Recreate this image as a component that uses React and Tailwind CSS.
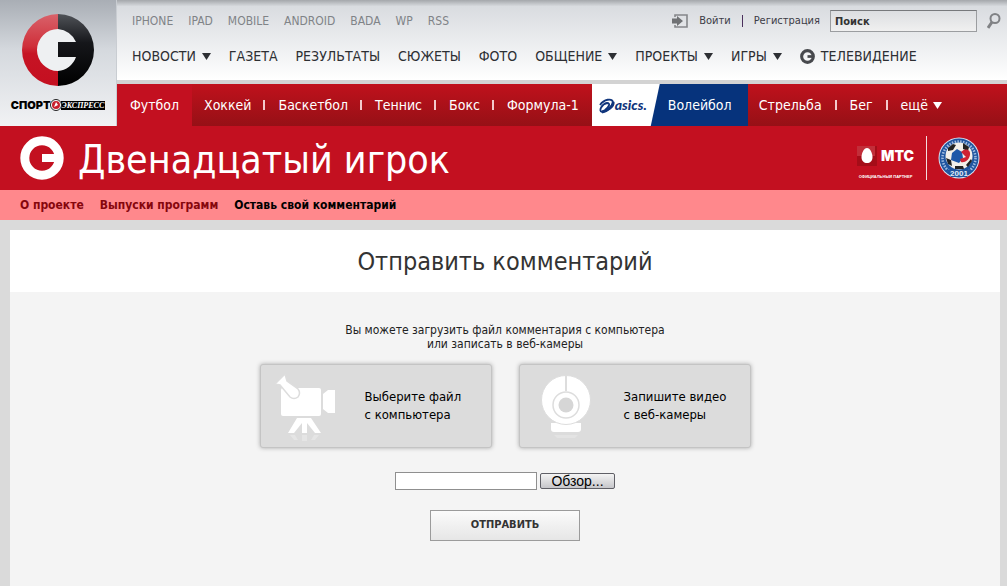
import { useState } from 'react'

const PLATFORMS = ['IPHONE', 'IPAD', 'MOBILE', 'ANDROID', 'BADA', 'WP', 'RSS']

const SECTIONS = [
  { label: 'НОВОСТИ', menu: true },
  { label: 'ГАЗЕТА' },
  { label: 'РЕЗУЛЬТАТЫ' },
  { label: 'СЮЖЕТЫ' },
  { label: 'ФОТО' },
  { label: 'ОБЩЕНИЕ', menu: true },
  { label: 'ПРОЕКТЫ', menu: true },
  { label: 'ИГРЫ', menu: true },
]

const SPORTS = ['Хоккей', 'Баскетбол', 'Теннис', 'Бокс', 'Формула-1']

function Triangle() {
  return (
    <svg viewBox="0 0 9 7" className="w-[9px] h-[7px] shrink-0" fill="currentColor">
      <path d="M0 0h9L4.5 7z" />
    </svg>
  )
}

// Ring with the short bar that makes the "СЭ" mark
function RingMark({ className }) {
  return (
    <svg viewBox="0 0 44 44" className={className} fill="none">
      <circle cx="22" cy="22" r="17.2" stroke="currentColor" strokeWidth="9" />
      <path d="M22 18h18v8H22z" fill="currentColor" />
    </svg>
  )
}

function Logo() {
  return (
    <a href="#" aria-label="Спорт-Экспресс" className="w-[117px] shrink-0 flex flex-col items-center pt-[14px] bg-linear-to-b from-[#a9aeb5] via-[#d5d9de] via-40% to-[#f1f2f4] border-r border-[#c9cdd2]">
      <svg viewBox="0 0 72 72" className="w-[72px] h-[72px]">
        <defs>
          <linearGradient id="red" x1="0" y1="0" x2="0" y2="1">
            <stop offset="0" stopColor="#d9626a" />
            <stop offset="0.45" stopColor="#cf2f3a" />
            <stop offset="0.55" stopColor="#c61424" />
            <stop offset="1" stopColor="#c40f20" />
          </linearGradient>
          <linearGradient id="black" x1="0" y1="0" x2="0" y2="1">
            <stop offset="0" stopColor="#505358" />
            <stop offset="0.4" stopColor="#15161a" />
            <stop offset="1" stopColor="#000" />
          </linearGradient>
        </defs>
        <circle cx="36" cy="36" r="22" fill="#eef0f2" />
        <path d="M36 0a36 36 0 0 0 0 72V57a21 21 0 0 1 0-42z" fill="url(#red)" />
        <path d="M36 0a36 36 0 0 1 0 72V57a21 21 0 0 0 18-14H36V28h18A21 21 0 0 0 36 15z" fill="url(#black)" />
      </svg>
      <span className="mt-[13px] flex items-center h-3 leading-3 text-black">
        <span className="text-[11px] font-black font-['Inter']">СПОРТ</span>
        <svg viewBox="0 0 12 12" className="w-3 h-3 -mx-px z-10">
          <circle cx="6" cy="6" r="5.5" fill="#fff" stroke="#222" />
          <circle cx="6" cy="6" r="4" fill="#c8202e" />
          <path d="M4 8l2-5 2 3z" fill="#fff" />
        </svg>
        <span className="bg-black text-white text-[8px] h-[9px] leading-[9px] italic font-bold px-px font-['Liberation_Serif']">ЭКСПРЕСС</span>
      </span>
    </a>
  )
}

function Separator() {
  return <span className="w-[2px] h-[10px] bg-[#f3c9cc]" />
}

function SportsNav() {
  return (
    <nav className="h-[42px] flex items-stretch text-[14px] text-white bg-linear-to-b from-[#c0111c] to-[#961016]">
      <a href="#" className="w-[75px] flex items-center justify-center bg-[#c31020]">Футбол</a>
      <div className="flex items-center gap-3 pl-3 pr-[13px]">
        {SPORTS.map((sport, i) => (
          <span key={sport} className="flex items-center gap-[13px]">
            {i > 0 && <Separator />}
            <a href="#">{sport}</a>
          </span>
        ))}
      </div>
      <a href="#" className="w-[156px] flex bg-[#06337c]">
        <span className="w-[68px] flex items-center pl-[6px] bg-white text-[#10357c] [clip-path:polygon(0_0,100%_0,59px_100%,0_100%)]">
          <svg viewBox="0 0 17 17" className="w-[17px] h-[17px]" fill="none" stroke="currentColor">
            <path d="M2 8C6 2 14 1 15 5c1 5-7 10-11 10-4-1 0-8 5-9 4 0 2 4-2 7" strokeWidth="1.8" />
            <path d="M15 5c1 4-6 9-11 10" strokeWidth="3" />
          </svg>
          <span className="text-[14px] leading-[14px] font-black italic font-['Lato']">asics.</span>
        </span>
        <span className="grow flex items-center pl-2">Волейбол</span>
      </a>
      <div className="flex items-center gap-[13px] pl-[11px]">
        <a href="#">Стрельба</a>
        <Separator />
        <a href="#">Бег</a>
        <Separator />
        <button type="button" className="flex items-center gap-[5px]">
          ещё <Triangle />
        </button>
      </div>
    </nav>
  )
}

function Header() {
  return (
    <header className="flex bg-[#c31020]">
      <Logo />
      <div className="grow min-w-0">
        <div className="h-20 bg-linear-to-b from-[#a4a7ab] via-[#d9dce0] via-8% to-white">
          <div className="flex h-[42px] items-center pl-[15px]">
            <div className="flex gap-[15px] text-[12px] text-[#808387]">
              {PLATFORMS.map(name => <a key={name} href="#">{name}</a>)}
            </div>
            <div className="ml-auto flex items-center text-[11px] text-[#3c3c46]">
              <svg viewBox="0 0 16 14" className="w-4 h-[14px] mr-[11px]">
                <path d="M3 3V1h12v12H3v-2" fill="none" stroke="#85878a" strokeWidth="1.6" />
                <path d="M0 4.500h5V2l6 5-6 5V9.500H0z" fill="#6f7174" />
              </svg>
              <a href="#">Войти</a>
              <span className="w-px h-3 bg-[#4a2f5c] mx-[11px]" />
              <a href="#">Регистрация</a>
              <input
                aria-label="Поиск"
                defaultValue="Поиск"
                className="ml-[10px] w-[147px] h-[22px] px-1 border border-[#9b9da0] border-t-[#77797c] bg-linear-to-b from-[#dcdee1] to-[#f0f0f0] text-[11px] font-bold text-[#333] outline-none"
              />
              <button type="button" aria-label="Найти" className="ml-[10px] mr-[6px] w-[14px] h-4 text-[#808285]">
                <svg viewBox="0 0 14 16" className="w-[14px] h-4" fill="none" stroke="currentColor">
                  <circle cx="8" cy="5.500" r="4.500" strokeWidth="2" />
                  <path d="M5 9l-4 6" strokeWidth="3" />
                </svg>
              </button>
            </div>
          </div>
          <nav className="flex h-7 items-center gap-[18px] pl-[15px] text-[14px] text-[#2d2f33]">
            {SECTIONS.map(s => (
              <a key={s.label} href="#" className="flex items-center gap-[6px]">
                {s.label}
                {s.menu && <Triangle />}
              </a>
            ))}
            <a href="#" className="flex items-center gap-[6px]">
              <RingMark className="w-[15px] h-[15px] text-[#47494d]" />
              ТЕЛЕВИДЕНИЕ
            </a>
          </nav>
        </div>
        <div className="h-1 bg-[#d3d3d3]" />
        <SportsNav />
      </div>
    </header>
  )
}

function Partners() {
  return (
    <div className="ml-auto mr-[27px] flex items-center">
      <div className="flex flex-col items-center pt-[10px]">
        <div className="flex items-center gap-1">
          <svg viewBox="0 0 20 20" className="w-5 h-5">
            <rect width="20" height="20" fill="#a50d18" />
            <rect width="18" height="10" fill="#e0505a" opacity="0.5" />
            <path d="M10 2c3 0 5.500 5 5.500 9s-2.500 6-5.500 6-5.500-2-5.500-6S7 2 10 2z" fill="#fff" />
          </svg>
          <span className="text-[14px] leading-5 font-black text-white font-['Inter']">МТС</span>
        </div>
        <span className="mt-2 text-[4px] leading-[6px] font-bold text-white font-['Liberation_Sans']">ОФИЦИАЛЬНЫЙ ПАРТНЕР</span>
      </div>
      <span className="w-px h-11 bg-[#f3dcde] ml-3 mr-[11px]" />
      <svg viewBox="0 0 42 42" className="w-[42px] h-[42px]">
        <circle cx="21" cy="21" r="20.500" fill="#d9e2f0" />
        <circle cx="21" cy="21" r="19.500" fill="#20559f" />
        <circle cx="21" cy="21" r="16.500" fill="none" stroke="#9fbbe0" strokeWidth="2.600" strokeDasharray="1.500 1.300" />
        <circle cx="21" cy="19" r="13.500" fill="#f2efe9" />
        <path d="M10 11l5-4 3 1-3 5-5 1zM25 6l6 4-1 4-5-2zM8 21l5 2 1 6-4-2zM28 28l5-6 1 2-4 6zM17 29l8 0 1 3-9 0z" fill="#222" />
        <path d="M14 16l5-4 5 3 1 6-4 5-8-3z" fill="#1d57a8" />
        <path d="M23 15c5-5 10-2 9 3s-5 8-9 7l-1-3 6-2-3-3z" fill="#cf2233" />
        <path d="M8 33h26l-5 7H13z" fill="#20559f" />
        <text x="21" y="39" textAnchor="middle" fontSize="8" fontWeight="bold" fill="#e4edf8" fontFamily="Liberation Sans">2001</text>
      </svg>
    </div>
  )
}

function CameraIcon() {
  return (
    <svg viewBox="0 0 64 68" className="w-16 h-[68px]" fill="#fff">
      <path d="M8 14h36q2 0 2 2v24q0 2-2 2H8q-2 0-2-2V16q0-2 2-2z" />
      <path d="M48 20l5-4h7v23h-7l-5-4z" />
      <path d="M10 0L0 10l5 1 10 12q4 3 8 0 3-4 0-8L12 7z" stroke="#ddd" strokeWidth="1.500" />
      <path d="M22 44h14l10 15h-6l-8-10v10h-5V49l-8 10h-6z" />
      <path d="M15 61h5l3 5h-4zM27 61h5v6h-5zM39 61h5l-4 5h-4z" opacity="0.25" />
    </svg>
  )
}

function WebcamIcon() {
  return (
    <svg viewBox="0 0 50 66" className="w-[50px] h-[66px]" fill="#fff">
      <path d="M10 48h30v6q0 3-3 3H13q-3 0-3-3z" />
      <circle cx="25" cy="25" r="24.500" stroke="#ddd" />
      <path d="M25 1v15" stroke="#ddd" strokeWidth="2" />
      <circle cx="25" cy="30" r="13" stroke="#ddd" strokeWidth="1.500" />
      <circle cx="25" cy="30" r="7.500" fill="#d6d6d6" />
      <path d="M13 60h24l-3 3H16z" opacity="0.2" />
    </svg>
  )
}

function SourceButton({ icon, lines }) {
  return (
    <button type="button" className="w-[232px] h-[84px] flex items-center bg-[#dcdcdc] border border-[#c4c4c4] rounded-[3px] shadow-[0_0_4px_#aaa] text-left text-[13px] leading-[18px] text-black">
      <span className="w-16 ml-[14px] mt-1 flex justify-center">{icon}</span>
      <span className="ml-[26px]">
        {lines[0]}<br />{lines[1]}
      </span>
    </button>
  )
}

function UploadForm() {
  const [fileName, setFileName] = useState('')

  return (
    <form onSubmit={e => e.preventDefault()} className="flex flex-col items-center pt-[31px] pb-[46px]">
      <p className="text-center text-[12px] leading-[14px] text-[#222]">
        Вы можете загрузить файл комментария с компьютера<br />
        или записать в веб-камеры
      </p>
      <div className="mt-[13px] flex gap-[27px]">
        <SourceButton icon={<CameraIcon />} lines={['Выберите файл', 'с компьютера']} />
        <SourceButton icon={<WebcamIcon />} lines={['Запишите видео', 'с веб-камеры']} />
      </div>
      <div className="mt-6 flex items-center gap-[3px]">
        <input
          aria-label="Файл"
          value={fileName}
          onChange={e => setFileName(e.target.value)}
          className="w-[142px] h-[18px] px-1 bg-white border border-[#8f8f8f] text-[12px] outline-none"
        />
        <button type="button" className="w-[75px] h-4 border border-[#5f5f66] rounded-[2px] bg-linear-to-b from-[#f4f4f4] to-[#c6c6ca] text-[14px] leading-[14px] text-black font-['Liberation_Sans']">
          Обзор...
        </button>
      </div>
      <button type="submit" className="mt-5 w-[150px] h-[31px] border border-[#9b9b9b] bg-linear-to-b from-[#fbfbfb] to-[#e6e6e6] text-[11px] font-bold text-[#333]">
        ОТПРАВИТЬ
      </button>
    </form>
  )
}

export default function App() {
  return (
    <div className="min-h-screen flex flex-col bg-[#dadada] font-['DejaVu_Sans_Condensed','DejaVu_Sans',sans-serif]">
      <Header />
      <div className="h-16 flex items-center pl-[20px] bg-[#c31020] text-white">
        <RingMark className="w-11 h-11" />
        <h1 className="ml-[14px] pt-1 text-[39px] leading-[48px]">Двенадцатый игрок</h1>
        <Partners />
      </div>
      <nav className="h-[30px] flex items-center gap-4 pl-5 bg-[#ff888c] text-[12px] font-bold text-[#86060c]">
        <a href="#">О проекте</a>
        <a href="#">Выпуски программ</a>
        <a href="#" className="text-black">Оставь свой комментарий</a>
      </nav>
      <main className="grow mt-[10px] ml-[10px] mr-[7px] bg-[#f4f4f4]">
        <h2 className="h-[62px] flex items-center justify-center pt-[2px] bg-white text-[25px] text-[#333]">Отправить комментарий</h2>
        <UploadForm />
      </main>
    </div>
  )
}
